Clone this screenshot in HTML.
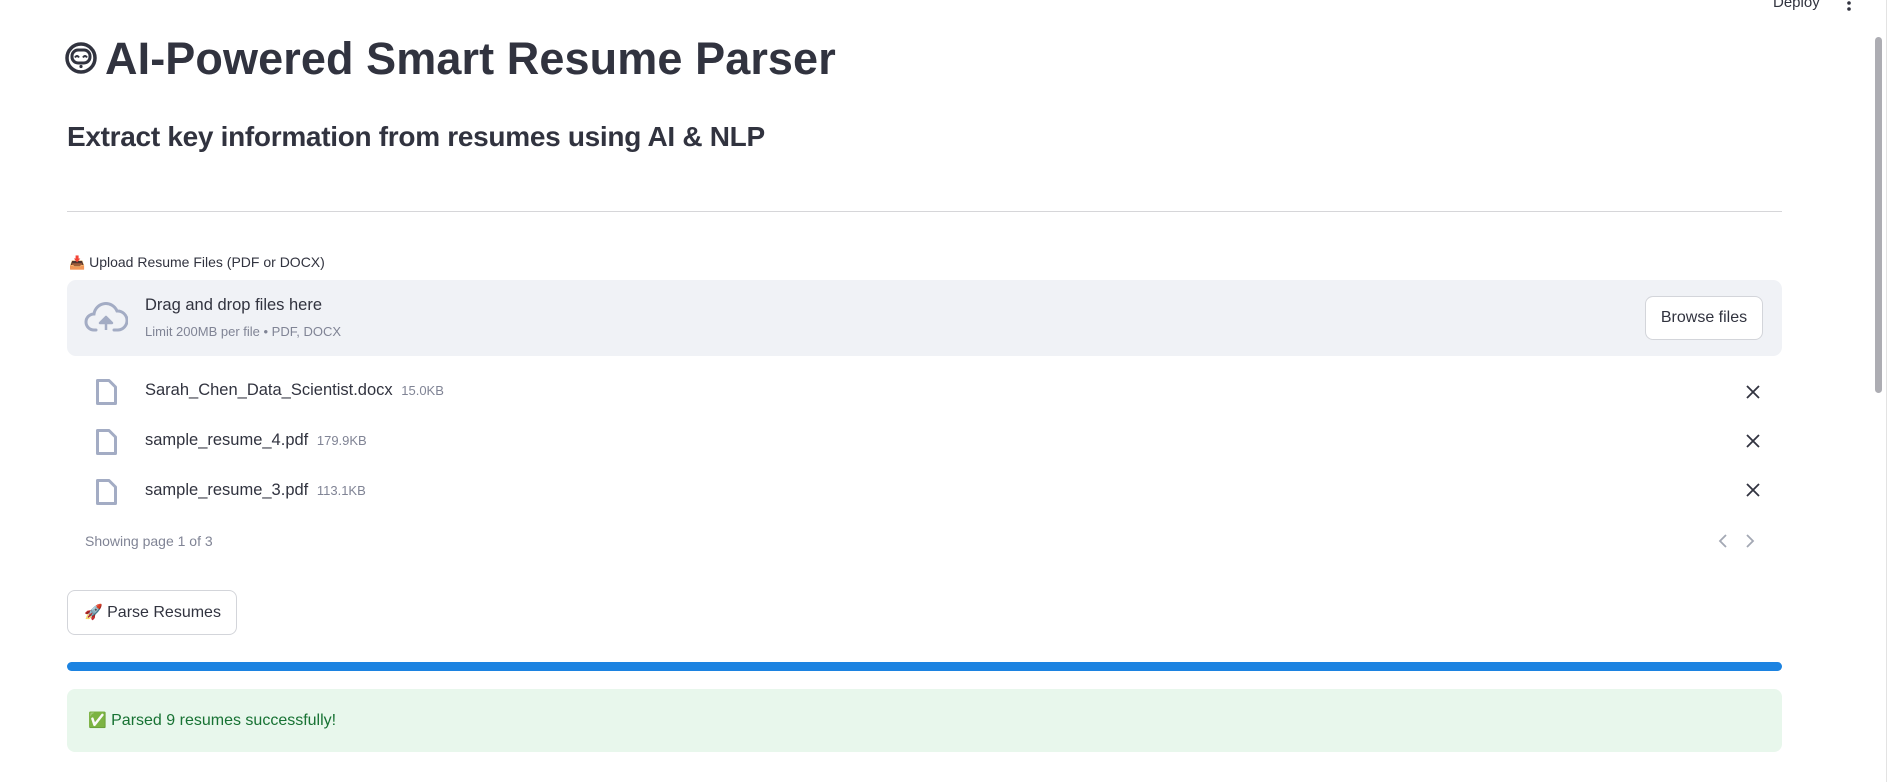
<!DOCTYPE html>
<html><head><meta charset="utf-8">
<style>
*{margin:0;padding:0;box-sizing:border-box}
body{width:1890px;height:782px;background:#fff;position:relative;overflow:hidden;font-family:"Liberation Sans","Noto Sans CJK SC",sans-serif;color:#31333f}
.a{position:absolute;white-space:nowrap}
</style></head><body>
<div class="a" style="left:1773px;top:-6px;font-size:15px">Deploy</div>
<svg class="a" style="left:1845px;top:0px" width="8" height="14"><circle cx="4" cy="3" r="1.8" fill="#31333f"/><circle cx="4" cy="9" r="1.8" fill="#31333f"/></svg>
<div class="a" style="left:1875px;top:37px;width:7px;height:356px;background:#adadb3;border-radius:4px"></div>
<div class="a" style="left:1886px;top:0;width:1px;height:782px;background:#e3e3e3"></div>

<svg class="a" style="left:64px;top:42px" width="34" height="32" viewBox="0 0 34 32"><circle cx="17" cy="16" r="14" fill="none" stroke="#31333f" stroke-width="3.5"/><rect x="8" y="8" width="18" height="13" rx="6" fill="none" stroke="#31333f" stroke-width="3"/><path d="M11 15.5q2-3 4 0M19 15.5q2-3 4 0" fill="none" stroke="#31333f" stroke-width="2"/><circle cx="17" cy="24.5" r="1.6" fill="#31333f"/></svg>
<div class="a" style="left:105px;top:31px;font-size:45px;font-weight:bold;letter-spacing:0.1px;line-height:56px">AI-Powered Smart Resume Parser</div>
<div class="a" style="left:67px;top:120px;font-size:28px;font-weight:bold;line-height:34px;letter-spacing:-0.3px">Extract key information from resumes using AI &amp; NLP</div>
<div class="a" style="left:67px;top:211px;width:1715px;height:1px;background:#d6d6d9"></div>

<div class="a" style="left:69px;top:253px;font-size:14px;line-height:18px"><span style="font-size:13px">📥</span> Upload Resume Files (PDF or DOCX)</div>
<div class="a" style="left:67px;top:280px;width:1715px;height:76px;background:#f0f2f6;border-radius:9px"></div>
<svg class="a" style="left:84px;top:300px" width="44" height="34" viewBox="0 0 44 34"><path d="M12 30H10A8 8 0 0 1 10 14 12 12 0 0 1 33 11 9.5 9.5 0 0 1 34 30H30" fill="none" stroke="#a3acc4" stroke-width="3" stroke-linecap="round"/><path d="M22 30V18M16 23l6-6 6 6z" fill="#a3acc4" stroke="#a3acc4" stroke-width="2.5" stroke-linejoin="round"/></svg>
<div class="a" style="left:145px;top:295px;font-size:16.5px;line-height:20px">Drag and drop files here</div>
<div class="a" style="left:145px;top:323px;font-size:13px;line-height:18px;color:#808495">Limit 200MB per file • PDF, DOCX</div>
<div class="a" style="left:1645px;top:296px;width:118px;height:44px;background:#fff;border:1px solid #d3d5da;border-radius:8px;font-size:16px;line-height:42px;text-align:center">Browse files</div>

<svg class="a" style="left:95px;top:378px" width="23" height="28" viewBox="0 0 23 28"><path d="M2.5 2.5H14L20.5 9V25.5H2.5Z" fill="none" stroke="#a3acc4" stroke-width="3" stroke-linejoin="round"/></svg>
<svg class="a" style="left:95px;top:428px" width="23" height="28" viewBox="0 0 23 28"><path d="M2.5 2.5H14L20.5 9V25.5H2.5Z" fill="none" stroke="#a3acc4" stroke-width="3" stroke-linejoin="round"/></svg>
<svg class="a" style="left:95px;top:478px" width="23" height="28" viewBox="0 0 23 28"><path d="M2.5 2.5H14L20.5 9V25.5H2.5Z" fill="none" stroke="#a3acc4" stroke-width="3" stroke-linejoin="round"/></svg>
<div class="a" style="left:145px;top:380px;font-size:16.5px;line-height:20px">Sarah_Chen_Data_Scientist.docx <span style="font-size:13px;color:#808495;margin-left:4px">15.0KB</span></div>
<div class="a" style="left:145px;top:430px;font-size:16.5px;line-height:20px">sample_resume_4.pdf <span style="font-size:13px;color:#808495;margin-left:4px">179.9KB</span></div>
<div class="a" style="left:145px;top:480px;font-size:16.5px;line-height:20px">sample_resume_3.pdf <span style="font-size:13px;color:#808495;margin-left:4px">113.1KB</span></div>
<svg class="a" style="left:1746px;top:385px" width="14" height="14"><path d="M1 1L13 13M13 1L1 13" stroke="#31333f" stroke-width="1.8"/></svg>
<svg class="a" style="left:1746px;top:434px" width="14" height="14"><path d="M1 1L13 13M13 1L1 13" stroke="#31333f" stroke-width="1.8"/></svg>
<svg class="a" style="left:1746px;top:483px" width="14" height="14"><path d="M1 1L13 13M13 1L1 13" stroke="#31333f" stroke-width="1.8"/></svg>
<div class="a" style="left:85px;top:532px;font-size:14px;line-height:18px;color:#808495">Showing page 1 of 3</div>
<svg class="a" style="left:1718px;top:534px" width="10" height="14"><path d="M8 1L2 7L8 13" fill="none" stroke="#a3a8b4" stroke-width="1.8"/></svg>
<svg class="a" style="left:1745px;top:534px" width="10" height="14"><path d="M2 1L8 7L2 13" fill="none" stroke="#a3a8b4" stroke-width="1.8"/></svg>

<div class="a" style="left:67px;top:590px;width:170px;height:45px;border:1px solid #d3d5da;border-radius:8px;font-size:16px;line-height:43px;padding-left:16px"><span style="font-size:15px">🚀</span> Parse Resumes</div>
<div class="a" style="left:67px;top:662px;width:1715px;height:9px;background:#1c83e1;border-radius:5px"></div>
<div class="a" style="left:67px;top:689px;width:1715px;height:63px;background:#e8f7ec;border-radius:8px"></div>
<div class="a" style="left:88px;top:711px;font-size:16px;line-height:20px;color:#177233"><span style="font-size:15px">✅</span> Parsed 9 resumes successfully!</div>
</body></html>
